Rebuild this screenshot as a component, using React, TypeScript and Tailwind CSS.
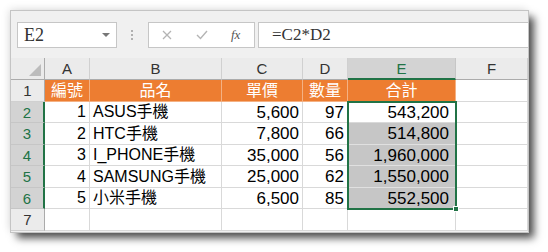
const rows: { no: string; name: string; price: string; qty: string; total: string }[] = [
  { no: '1', name: 'ASUS手機', price: '5,600', qty: '97', total: '543,200' },
  { no: '2', name: 'HTC手機', price: '7,800', qty: '66', total: '514,800' },
  { no: '3', name: 'I_PHONE手機', price: '35,000', qty: '56', total: '1,960,000' },
  { no: '4', name: 'SAMSUNG手機', price: '25,000', qty: '62', total: '1,550,000' },
  { no: '5', name: '小米手機', price: '6,500', qty: '85', total: '552,500' },
]

function ColHead({ label, active }: { label: string; active?: boolean }) {
  return (
    <div
      className={
        active
          ? 'flex items-center justify-center border-r border-b-2 border-r-[#c6c6c6] border-b-[#217346] bg-[#d3d3d3] text-[15px] text-[#217346]'
          : 'flex items-center justify-center border-r border-b border-r-[#d0d0d0] border-b-[#ababab] bg-[#ebebeb] text-[15px] text-[#333]'
      }
    >
      {label}
    </div>
  )
}

function RowHead({ label, active }: { label: string; active?: boolean }) {
  return (
    <div
      className={
        active
          ? 'flex items-center justify-center border-b border-r-2 border-b-[#c6c6c6] border-r-[#217346] bg-[#d3d3d3] text-[15px] text-[#217346]'
          : 'flex items-center justify-center border-b border-r border-b-[#d0d0d0] border-r-[#ababab] bg-[#ebebeb] text-[15px] text-[#333]'
      }
    >
      {label}
    </div>
  )
}

const cell = 'flex items-center border-r border-b border-[#d9d9d9] text-[16px] text-black whitespace-nowrap overflow-hidden'
const head = 'flex items-center justify-center border-r border-b border-[#f4b183] bg-[#ed7d31] text-[16px] text-white'

export default function App() {
  return (
    <div className="w-[548px] h-[252px] bg-white pt-[11px] pl-[11px] font-['Liberation_Sans','Noto_Sans_CJK_TC',sans-serif] leading-none">
      <div className="w-[517px] h-[221px] bg-[#f0f0f0] overflow-hidden shadow-[0_0_0_1px_#c4c4c4,6px_6px_8px_rgba(0,0,0,0.7),-2px_-2px_8px_rgba(0,0,0,0.12)]">
        {/* formula bar */}
        <div className="h-[47px] flex items-center">
          <div className="ml-[6px] w-[100px] h-[26px] bg-white border border-[#c6c6c6] flex items-center pl-[6px] pr-[6px]">
            <span className="flex-1 font-['Liberation_Serif',serif] text-[18px] text-[#333]">E2</span>
            <span className="w-0 h-0 border-l-[4px] border-r-[4px] border-t-[4px] border-l-transparent border-r-transparent border-t-[#777]" />
          </div>
          <div className="ml-[14px] w-[2px] flex flex-col gap-[2px]">
            <span className="w-[2px] h-[2px] bg-[#b0b0b0]" />
            <span className="w-[2px] h-[2px] bg-[#b0b0b0]" />
            <span className="w-[2px] h-[2px] bg-[#b0b0b0]" />
          </div>
          <div className="ml-[15px] w-[107px] h-[26px] bg-white border border-[#c6c6c6] flex items-center">
            <svg width="10" height="10" viewBox="0 0 10 10" className="ml-[13px]">
              <path d="M1 1 L9 9 M9 1 L1 9" stroke="#b4b4b4" strokeWidth="1.3" fill="none" />
            </svg>
            <svg width="12" height="10" viewBox="0 0 12 10" className="ml-[24px]">
              <path d="M1 5 L4.5 8.5 L11 1" stroke="#b4b4b4" strokeWidth="1.4" fill="none" />
            </svg>
            <span className="ml-[23px] font-['Liberation_Serif',serif] italic text-[13px] text-[#555]">fx</span>
          </div>
          <div className="ml-[3px] flex-1 h-[26px] bg-white border-y border-l border-[#c6c6c6] flex items-center pl-[13px] font-['Liberation_Serif',serif] text-[17px] text-[#333]">
            =C2*D2
          </div>
        </div>

        {/* sheet */}
        <div className="relative bg-white">
          <div className="grid grid-cols-[34px_45px_132px_81px_45px_108px_72px] grid-rows-[22px_22px_21px_22px_21px_22px_21px_22px]">
            {/* column headers */}
            <div className="flex items-end justify-end pr-[3px] pb-[3px] border-r border-b border-r-[#ababab] border-b-[#ababab] bg-[#ebebeb]">
              <svg width="12" height="12" viewBox="0 0 12 12">
                <path d="M12 0 L12 12 L0 12 Z" fill="#bcbcbc" />
              </svg>
            </div>
            <ColHead label="A" />
            <ColHead label="B" />
            <ColHead label="C" />
            <ColHead label="D" />
            <ColHead label="E" active />
            <ColHead label="F" />

            {/* row 1 */}
            <RowHead label="1" />
            <div className={head}>編號</div>
            <div className={head}>品名</div>
            <div className={head}>單價</div>
            <div className={head}>數量</div>
            <div className={head}>合計</div>
            <div className={cell} />

            {rows.map((r, i) => (
              <div key={r.no} className="contents">
                <RowHead label={String(i + 2)} active />
                <div className={`${cell} justify-end pr-[3px]`}>{r.no}</div>
                <div className={`${cell} pl-[3px]`}>{r.name}</div>
                <div className={`${cell} justify-end pr-[3px] text-[17px]`}>{r.price}</div>
                <div className={`${cell} justify-end pr-[3px] text-[17px]`}>{r.qty}</div>
                <div className={`${cell} justify-end pr-[6px] text-[17px] ${i === 0 ? 'bg-white' : 'bg-[#c6c6c6] border-b-[#e0e0e0] border-r-[#c6c6c6]'}`}>
                  {r.total}
                </div>
                <div className={cell} />
              </div>
            ))}

            {/* row 7 */}
            <RowHead label="7" />
            <div className={cell} />
            <div className={cell} />
            <div className={cell} />
            <div className={cell} />
            <div className={cell} />
            <div className={cell} />
          </div>

          {/* selection E2:E6 */}
          <div className="absolute left-[336px] top-[43px] w-[110px] h-[109px] border-2 border-[#217346] pointer-events-none" />
          <div className="absolute left-[442px] top-[148px] w-[6px] h-[6px] bg-[#217346] border border-white" />
        </div>
      </div>
    </div>
  )
}
